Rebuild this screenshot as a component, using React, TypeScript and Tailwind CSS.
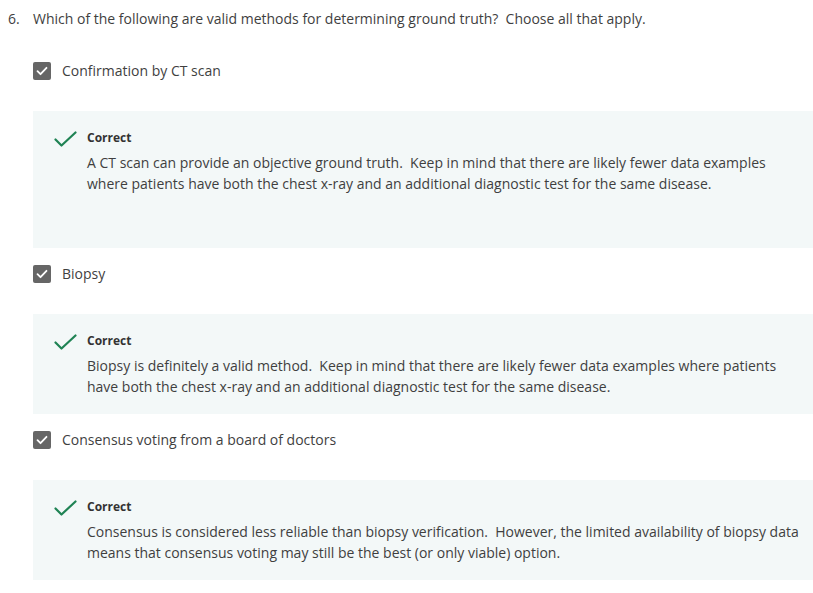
const options = [
  {
    label: 'Confirmation by CT scan',
    feedback:
      'A CT scan can provide an objective ground truth.  Keep in mind that there are likely fewer data examples where patients have both the chest x-ray and an additional diagnostic test for the same disease.',
    extra: true,
  },
  {
    label: 'Biopsy',
    feedback:
      'Biopsy is definitely a valid method.  Keep in mind that there are likely fewer data examples where patients have both the chest x-ray and an additional diagnostic test for the same disease.',
    extra: false,
  },
  {
    label: 'Consensus voting from a board of doctors',
    feedback:
      'Consensus is considered less reliable than biopsy verification.  However, the limited availability of biopsy data means that consensus voting may still be the best (or only viable) option.',
    extra: false,
  },
];

function CheckedBox() {
  return (
    <span className="flex items-center justify-center w-[18px] h-[18px] rounded-[2px] bg-[#666666] shrink-0">
      <svg width="12" height="10" viewBox="0 0 12 10" fill="none">
        <path d="M1.5 5.2 L4.5 8.2 L10.5 1.8" stroke="#ffffff" strokeWidth="1.8" strokeLinecap="round" strokeLinejoin="round" />
      </svg>
    </span>
  );
}

function GreenCheck() {
  return (
    <svg width="23" height="17" viewBox="0 0 23 17" fill="none" className="shrink-0">
      <path d="M1.5 8.5 L7.5 14.5 L21.5 1.5" stroke="#1f8354" strokeWidth="2.2" strokeLinecap="round" strokeLinejoin="round" />
    </svg>
  );
}

export default function App() {
  return (
    <div
      className="w-[813px] h-[593px] bg-white pt-[8px] pl-[8px] text-[14px] text-[#3f3f3f] overflow-hidden"
      style={{ fontFamily: '"Open Sans", "Noto Sans", sans-serif' }}
    >
      <div className="flex leading-[21px]">
        <span className="w-[25px] shrink-0">6.</span>
        <span className="whitespace-pre-wrap">Which of the following are valid methods for determining ground truth?  Choose all that apply.</span>
      </div>

      <div className="flex flex-col">
        {options.map((o, i) => (
          <div key={i} className={i === 0 ? 'mt-[31px]' : 'mt-[15px]'}>
            <div className="flex items-center gap-[11px] ml-[25px] h-[21px] leading-[21px]">
              <CheckedBox />
              <span>{o.label}</span>
            </div>
            <div
              className={`mt-[30px] ml-[25px] bg-[#f3f8f8] pt-[19px] pl-[21px] pr-[10px] flex gap-[10px] ${
                o.extra ? 'pb-[54px]' : 'pb-[17px]'
              }`}
            >
              <div className="pt-[1px]">
                <GreenCheck />
              </div>
              <div>
                <div className="text-[12px] font-bold leading-[16px] text-[#333333]">Correct</div>
                <p className="mt-[6px] leading-[21px] whitespace-pre-wrap">{o.feedback}</p>
              </div>
            </div>
          </div>
        ))}
      </div>
    </div>
  );
}
